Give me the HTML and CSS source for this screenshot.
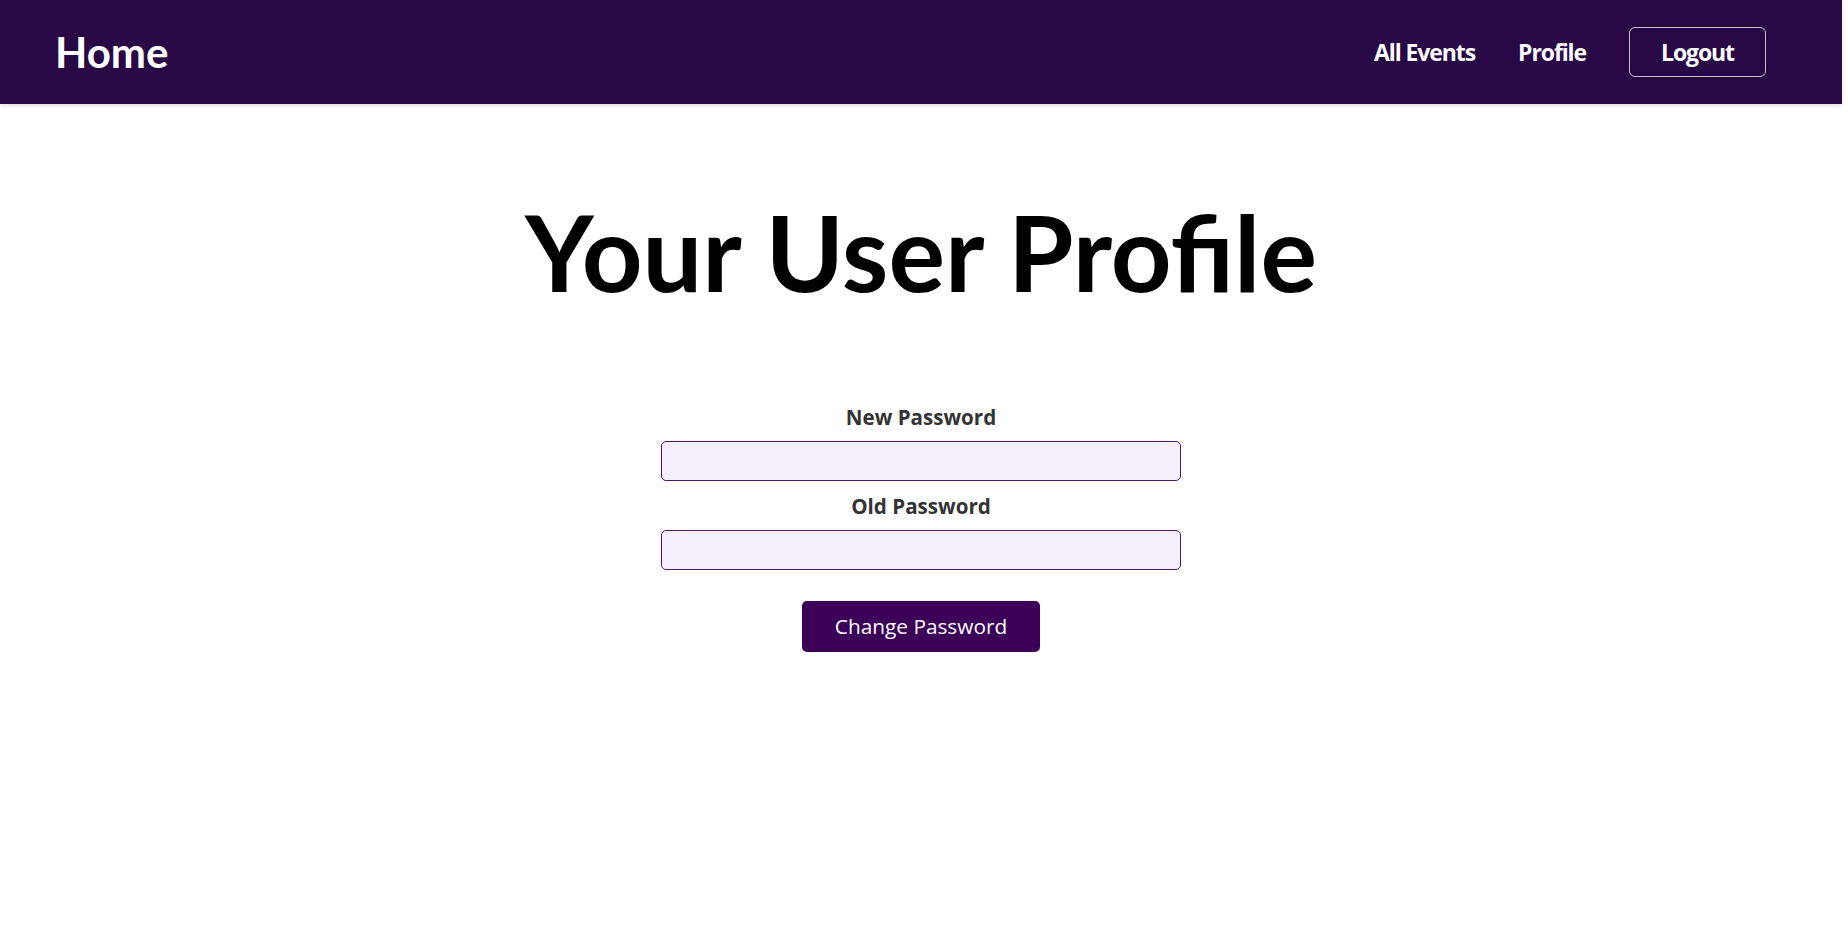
FILE: index.html
```html
<!DOCTYPE html>
<html lang="en">
<head>
<meta charset="utf-8">
<title>Your User Profile</title>
<link rel="stylesheet" href="styles.css">
</head>
<body>
<div class="page">
  <header class="navbar">
    <a class="brand" href="#">Home</a>
    <nav class="nav-links">
      <a class="nav-link" href="#">All Events</a>
      <a class="nav-link" href="#">Profile</a>
      <button class="logout" type="button">Logout</button>
    </nav>
  </header>
  <main class="main">
    <h1 class="title">Your User Profile</h1>
    <form class="pw-form">
      <label class="field-label" for="newpw">New Password</label>
      <input class="field-input" id="newpw" type="password">
      <label class="field-label" for="oldpw">Old Password</label>
      <input class="field-input" id="oldpw" type="password">
      <button class="submit" type="button">Change Password</button>
    </form>
  </main>
</div>
</body>
</html>
```

FILE: styles.css
```css
* { box-sizing: border-box; }
html, body { margin: 0; padding: 0; background: #fff; }
body { font-family: "Open Sans", "Liberation Sans", sans-serif; }

.page {
  width: calc(100% - 6px);
}

.navbar {
  height: 104px;
  background: #280845;
  display: flex;
  align-items: center;
  justify-content: space-between;
  padding: 0 76px 0 55px;
  box-shadow: 0 2px 4px rgba(0, 0, 0, 0.12);
}

.brand {
  font-family: Lato, "Liberation Sans", sans-serif;
  font-weight: 700;
  font-size: 42px;
  color: #fff;
  text-decoration: none;
  line-height: 1.2;
}

.nav-links {
  display: flex;
  align-items: center;
  gap: 43px;
}

.nav-link {
  font-family: "Open Sans", "Liberation Sans", sans-serif;
  font-weight: 700;
  font-size: 23px;
  letter-spacing: -1.1px;
  color: #fff;
  text-decoration: none;
}

.logout {
  font-family: "Open Sans", "Liberation Sans", sans-serif;
  font-weight: 700;
  font-size: 23px;
  letter-spacing: -1.1px;
  color: #fff;
  background: transparent;
  border: 1px solid rgba(255, 255, 255, 0.75);
  border-radius: 6px;
  height: 50px;
  padding: 0 31px;
  line-height: 1;
}

.main {
  display: flex;
  flex-direction: column;
  align-items: center;
  padding-top: 84px;
}

.title {
  margin: 0;
  font-family: Lato, "Liberation Sans", sans-serif;
  font-weight: 700;
  font-size: 106px;
  line-height: 1.2;
  color: #000;
}

.pw-form {
  margin-top: 90px;
  width: 520px;
  display: flex;
  flex-direction: column;
  align-items: center;
}

.field-label {
  font-weight: 700;
  font-size: 20.6px;
  line-height: 24px;
  color: #333;
  margin-bottom: 12px;
}

.field-input {
  width: 520px;
  height: 40px;
  background: #f5eefb;
  border: 1px solid #4a1a6e;
  border-radius: 5px;
  margin: 0 0 13px;
  padding: 0 10px;
  font-family: inherit;
  font-size: 18px;
}

.submit {
  margin-top: 18px;
  background: #3c0059;
  color: #fff;
  border: none;
  border-radius: 5px;
  font-family: "Open Sans", "Liberation Sans", sans-serif;
  font-weight: 400;
  font-size: 20.8px;
  line-height: 24px;
  padding: 13px 33px 14px;
}
```
